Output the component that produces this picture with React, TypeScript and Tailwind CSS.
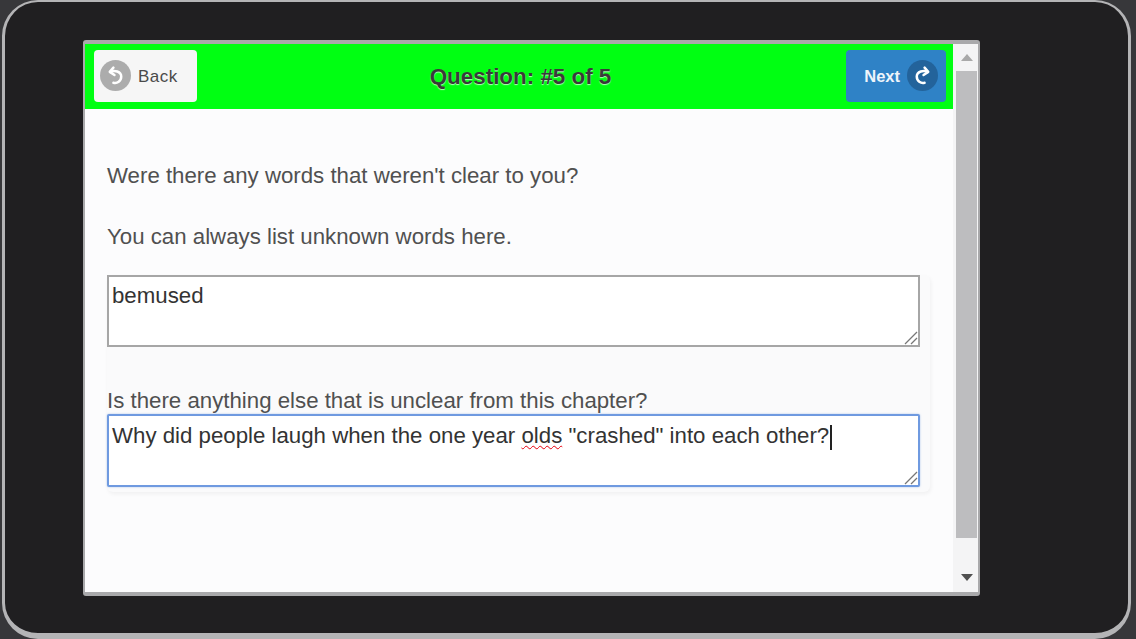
function ArrowBadge({ flip, className }: { flip?: boolean; className: string }) {
  return (
    <span className={`flex h-[31px] w-[31px] items-center justify-center rounded-full ${className}`}>
      <svg
        viewBox="0 0 24 24"
        className={`h-[25px] w-[25px] ${flip ? '-scale-x-100' : ''}`}
        fill="none"
        stroke="#fff"
        strokeWidth="2.4"
        strokeLinecap="round"
        strokeLinejoin="round"
      >
        <path d="M10 4.5 L6.5 8.5 L11 11.5" />
        <path d="M7 8.5 C11 6.5 17.5 8 17.5 13 C17.5 17.5 13.5 20 10 19" />
      </svg>
    </span>
  )
}

function Grip() {
  return (
    <svg viewBox="0 0 14 14" className="absolute bottom-0 right-0 h-[14px] w-[14px]" stroke="#777" strokeWidth="1.2">
      <path d="M1 13 L13 1" />
      <path d="M7 13 L13 7" />
    </svg>
  )
}

export default function App() {
  return (
    <div className="h-[639px] w-[1136px] overflow-hidden bg-[#37373a] pl-[2px] font-['Liberation_Sans',Arial,sans-serif]">
      <div className="h-[639px] w-[1129px] rounded-[36px] border-[3px] border-b-[6px] border-t-[2px] border-[#b4b4b6] bg-[#201f21] pl-[78px] pt-[38px]">
        <div className="flex h-[556px] w-[897px] rounded-[3px] border-[2px] border-b-[4px] border-t-[4px] border-[#a9a9ab] bg-[#fcfcfd]">
          <div className="flex w-[868px] flex-col">
            <header className="flex h-[65px] items-center justify-between bg-[#00ff12] pb-[2px] pl-[9px] pr-[7px]">
              <button className="flex h-[52px] w-[103px] items-center gap-[7px] rounded-[4px] bg-[#f6f6f6] pl-[6px] text-[17px] tracking-[0.5px] text-[#4a4a4a]">
                <ArrowBadge className="bg-[#acacac]" />
                <span className="mt-[2px]">Back</span>
              </button>
              <h1 className="mr-[2px] mt-[2px] text-[22.4px] font-bold text-[#3a3a3a] [text-shadow:0_1px_1px_rgba(255,255,255,0.7)]">
                Question: #5 of 5
              </h1>
              <button className="flex h-[52px] w-[100px] items-center justify-end gap-[7px] rounded-[4px] bg-[#2f82c6] pr-[8px] text-[16.5px] font-bold text-[#eef5fb]">
                <span className="mt-[2px]">Next</span>
                <ArrowBadge flip className="bg-[#23639b]" />
              </button>
            </header>
            <main className="flex-1 pl-[22px] pt-[53px] text-[22.25px] leading-[28px] text-[#505050]">
              <p>Were there any words that weren't clear to you?</p>
              <p className="mt-[33px]">You can always list unknown words here.</p>
              <div className="mt-[24px] w-[823px] rounded-[6px] bg-[#fafafb] pb-[5px] shadow-[1px_2px_4px_rgba(0,0,0,0.05)]">
                <div className="relative h-[72px] w-[813px] border-[2px] border-[#a6a6a6] bg-white pl-[3px] pt-[5px] text-[#333]">
                  bemused
                  <Grip />
                </div>
                <p className="mt-[40px] h-[27px]">Is there anything else that is unclear from this chapter?</p>
                <div className="relative h-[73px] w-[813px] rounded-[2px] border-[2px] border-[#6f9ae0] bg-white pl-[3px] pt-[6px] text-[#333] shadow-[0_0_2px_rgba(111,154,224,0.6)]">
                  Why did people laugh when the one year{' '}
                  <span className="underline decoration-red-600 decoration-wavy decoration-1 underline-offset-2">olds</span>{' '}
                  "crashed" into each other?
                  <span className="ml-px inline-block h-[25px] w-[2px] bg-[#222] align-middle" />
                  <Grip />
                </div>
              </div>
            </main>
          </div>
          <aside className="flex w-[25px] flex-col items-center bg-[#f4f4f5] pl-[2px]">
            <span className="mt-[10px] h-0 w-0 border-x-[6px] border-b-[7px] border-x-transparent border-b-[#a9a9a9]" />
            <div className="mt-[10px] h-[467px] w-[21px] bg-[#bdbdbf]" />
            <span className="mt-[36px] h-0 w-0 border-x-[6px] border-t-[7px] border-x-transparent border-t-[#505050]" />
          </aside>
        </div>
      </div>
    </div>
  )
}
